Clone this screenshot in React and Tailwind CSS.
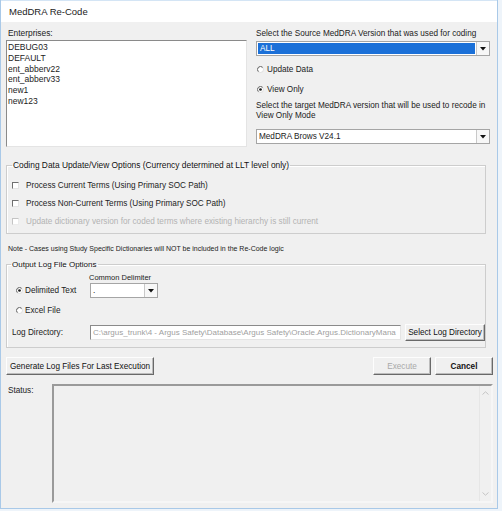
import React from "react";

const enterprises = ["DEBUG03", "DEFAULT", "ent_abberv22", "ent_abberv33", "new1", "new123"];

const Radio = ({ checked }) => (
  <svg width="7" height="7" viewBox="0 0 10 10" className="shrink-0">
    <circle cx="5" cy="5" r="4.3" fill="#fff" stroke="#dadada" strokeWidth="1.2" />
    <path d="M1.95 8.05A4.3 4.3 0 0 1 8.05 1.95" fill="none" stroke="#5f5f5f" strokeWidth="1.4" />
    {checked && <circle cx="5" cy="5" r="1.9" fill="#1a1a1a" />}
  </svg>
);

const Check = ({ disabled }) => (
  <div
    className={`w-[7px] h-[7px] shrink-0 bg-white border ${
      disabled
        ? "border-[#c4c4c4] border-r-[#ececec] border-b-[#ececec]"
        : "border-[#6f6f6f] border-r-[#e4e4e4] border-b-[#e4e4e4]"
    }`}
  />
);

const Combo = ({ value, selected, className }) => (
  <div className={`flex h-[15px] border border-[#a5a5a5] bg-white ${className}`}>
    <div
      className={`flex-1 flex items-center pl-[2px] ${
        selected ? "bg-[#1b70d8] text-white m-[1px]" : ""
      }`}
    >
      {value}
    </div>
    <div className="w-[13px] flex items-center justify-center border-l border-[#c9c9c9] bg-[#f7f7f7]">
      <svg width="6" height="4" viewBox="0 0 6 4">
        <path d="M0 0h6L3 3.5z" fill="#111" />
      </svg>
    </div>
  </div>
);

const Button = ({ children, className, disabled }) => (
  <button
    className={`flex items-center justify-center bg-[#f0f0f0] border border-[#fdfdfd] border-r-[#696969] border-b-[#696969] shadow-[inset_-1px_-1px_0_#bcbcbc] whitespace-nowrap ${
      disabled ? "text-[#a9a9a9]" : "text-[#111]"
    } ${className}`}
  >
    {children}
  </button>
);

const Group = ({ title, className, legendClass, children }) => (
  <fieldset className={`border border-[#cdcdcd] shadow-[inset_1px_1px_0_#fff] ${className}`}>
    <legend className={`px-[1px] leading-[11px] text-[#111] whitespace-nowrap ${legendClass}`}>{title}</legend>
    {children}
  </fieldset>
);

export default function App() {
  return (
    <div className="w-[502px] h-[511px] bg-[#eef4fa] font-['Liberation_Sans',Arial,sans-serif] text-[8.2px] leading-[11px] text-[#222]">
      <div className="w-[498px] h-[509px] flex flex-col border-x border-b border-[#a9c9e8]">
        {/* title bar */}
        <div className="h-[22px] shrink-0 bg-white border-t border-[#d4e5f5] flex items-center pl-[8px] text-[9.5px] text-[#222]">
          MedDRA Re-Code
        </div>

        <div className="flex-1 bg-[#f0f0f0] pl-[5px] pr-[4px] flex flex-col">
          {/* top row */}
          <div className="flex">
            <div className="w-[241px] flex flex-col">
              <div className="mt-[6px] pl-[2px] text-[8.4px]">Enterprises:</div>
              <div className="mt-[1px] h-[107px] bg-white border border-[#8a8a8a] border-r-[#e4e4e4] border-b-[#e4e4e4] pl-[1px] pt-[1px] text-[8.5px]">
                {enterprises.map((e) => (
                  <div key={e} className="leading-[10.8px]">
                    {e}
                  </div>
                ))}
              </div>
            </div>

            <div className="ml-[9px] w-[234px] flex flex-col">
              <div className="mt-[6px] whitespace-nowrap">Select the Source MedDRA Version that was used for coding</div>
              <Combo value="ALL" selected className="mt-[2px]" />
              <div className="mt-[8px] flex items-center gap-[3px] pl-[1px]">
                <Radio />
                <span>Update Data</span>
              </div>
              <div className="mt-[9px] flex items-center gap-[3px] pl-[1px]">
                <Radio checked />
                <span>View Only</span>
              </div>
              <div className="mt-[6px] leading-[10px] whitespace-nowrap">
                Select the target MedDRA version that will be used to recode in
                <br />
                View Only Mode
              </div>
              <Combo value="MedDRA Brows V24.1" className="mt-[8px]" />
            </div>
          </div>

          {/* coding options */}
          <Group
            title="Coding Data Update/View Options (Currency determined at LLT level only)"
            legendClass="text-[8.4px]"
            className="mt-[13px] w-[480px] pl-[5px] pt-[9px] pb-[6px] flex flex-col gap-[7px]"
          >
            <div className="flex items-center gap-[7px]">
              <Check />
              <span>Process Current Terms (Using Primary SOC Path)</span>
            </div>
            <div className="flex items-center gap-[7px]">
              <Check />
              <span>Process Non-Current Terms (Using Primary SOC Path)</span>
            </div>
            <div className="flex items-center gap-[7px] text-[#b3b3b3]">
              <Check disabled />
              <span>Update dictionary version for coded terms where existing hierarchy is still current</span>
            </div>
          </Group>

          <div className="mt-[9px] pl-[2px] text-[7px]">
            Note - Cases using Study Specific Dictionaries will NOT be included in the Re-Code logic
          </div>

          {/* output log */}
          <Group
            title="Output Log File Options"
            legendClass="ml-[4px] text-[8px]"
            className="mt-[5px] w-[480px] pb-[6px] flex flex-col"
          >
            <div className="ml-[82px] mt-[2px] text-[7.5px]">Common Delimiter</div>
            <div className="flex items-center">
              <div className="w-[83px] flex items-center gap-[2px] pl-[9px]">
                <Radio checked />
                <span>Delimited Text</span>
              </div>
              <Combo value="." className="w-[68px] h-[14px]" />
            </div>
            <div className="mt-[7px] flex items-center gap-[2px] pl-[9px]">
              <Radio />
              <span>Excel File</span>
            </div>
            <div className="mt-[8px] flex items-center">
              <div className="w-[83px] pl-[5px]">Log Directory:</div>
              <div className="w-[311px] h-[15px] bg-white border border-[#8a8a8a] border-r-[#e4e4e4] border-b-[#e4e4e4] flex items-center pl-[2px] text-[8px] text-[#a0a0a0] overflow-hidden whitespace-nowrap">
                C:\argus_trunk\4 - Argus Safety\Database\Argus Safety\Oracle.Argus.DictionaryMana
              </div>
              <Button className="ml-[4px] w-[80px] h-[17px]">Select Log Directory</Button>
            </div>
          </Group>

          {/* action buttons */}
          <div className="mt-[9px] flex items-center">
            <Button className="w-[148px] h-[18px]">Generate Log Files For Last Execution</Button>
            <Button disabled className="ml-auto w-[58px] h-[18px]">
              Execute
            </Button>
            <Button className="ml-[4px] w-[58px] h-[18px] font-bold">Cancel</Button>
          </div>

          {/* status */}
          <div className="mt-[9px] flex">
            <div className="w-[46px] pl-[2px] pt-[1px]">Status:</div>
            <div className="w-[441px] h-[119px] flex border-2 border-[#9a9a9a] border-r-[#f6f6f6] border-b-[#f6f6f6]">
              <div className="flex-1" />
              <div className="w-[12px] border-l border-[#e6e6e6] flex flex-col items-center justify-between py-[5px]">
                <svg width="7" height="4" viewBox="0 0 7 4">
                  <path d="M0.5 3.5L3.5 0.8L6.5 3.5" fill="none" stroke="#c4c4c4" />
                </svg>
                <svg width="7" height="4" viewBox="0 0 7 4">
                  <path d="M0.5 0.5L3.5 3.2L6.5 0.5" fill="none" stroke="#c4c4c4" />
                </svg>
              </div>
            </div>
          </div>
        </div>
      </div>
    </div>
  );
}
